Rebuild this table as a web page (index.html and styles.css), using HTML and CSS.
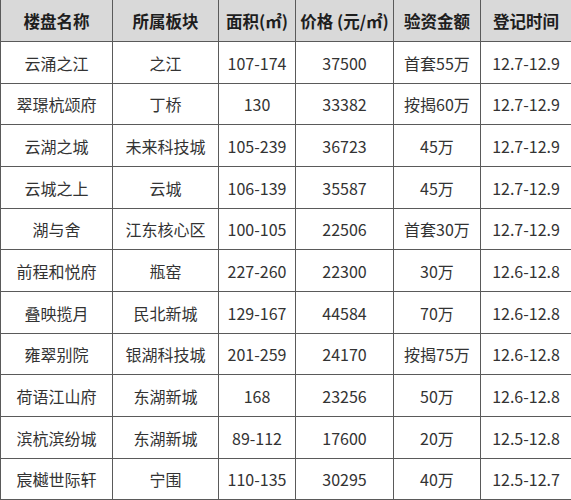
FILE: index.html
```html
<!DOCTYPE html>
<html lang="zh-CN">
<head>
<meta charset="utf-8">
<link rel="stylesheet" href="styles.css">
</head>
<body>
<table class="sheet">
  <colgroup>
    <col class="c1"><col class="c2"><col class="c3"><col class="c4"><col class="c5"><col class="c6">
  </colgroup>
  <thead>
    <tr><th>楼盘名称</th><th>所属板块</th><th>面积(㎡)</th><th>价格 (元/㎡)</th><th>验资金额</th><th>登记时间</th></tr>
  </thead>
  <tbody>
    <tr class="r42"><td>云涌之江</td><td>之江</td><td>107-174</td><td>37500</td><td>首套55万</td><td>12.7-12.9</td></tr>
    <tr class="r41"><td>翠璟杭颂府</td><td>丁桥</td><td>130</td><td>33382</td><td>按揭60万</td><td>12.7-12.9</td></tr>
    <tr class="r42"><td>云湖之城</td><td>未来科技城</td><td>105-239</td><td>36723</td><td>45万</td><td>12.7-12.9</td></tr>
    <tr class="r42"><td>云城之上</td><td>云城</td><td>106-139</td><td>35587</td><td>45万</td><td>12.7-12.9</td></tr>
    <tr class="r41"><td>湖与舍</td><td>江东核心区</td><td>100-105</td><td>22506</td><td>首套30万</td><td>12.7-12.9</td></tr>
    <tr class="r42"><td>前程和悦府</td><td>瓶窑</td><td>227-260</td><td>22300</td><td>30万</td><td>12.6-12.8</td></tr>
    <tr class="r42"><td>叠映揽月</td><td>民北新城</td><td>129-167</td><td>44584</td><td>70万</td><td>12.6-12.8</td></tr>
    <tr class="r41"><td>雍翠别院</td><td>银湖科技城</td><td>201-259</td><td>24170</td><td>按揭75万</td><td>12.6-12.8</td></tr>
    <tr class="r42"><td>荷语江山府</td><td>东湖新城</td><td>168</td><td>23256</td><td>50万</td><td>12.6-12.8</td></tr>
    <tr class="r42"><td>滨杭滨纷城</td><td>东湖新城</td><td>89-112</td><td>17600</td><td>20万</td><td>12.5-12.8</td></tr>
    <tr class="r41"><td>宸樾世际轩</td><td>宁围</td><td>110-135</td><td>30295</td><td>40万</td><td>12.5-12.7</td></tr>
  </tbody>
</table>
</body>
</html>
```
FILE: styles.css
```css
html, body {
  margin: 0;
  padding: 0;
  background: #ffffff;
}
.sheet {
  border-collapse: collapse;
  table-layout: fixed;
  width: 571px;
  margin-top: -1px;
  font-family: "Noto Sans CJK SC", "Noto Sans", sans-serif;
  font-size: 16px;
  color: #333333;
}
.c1 { width: 112px; }
.c2 { width: 106px; }
.c3 { width: 77px; }
.c4 { width: 98px; }
.c5 { width: 87px; }
.c6 { width: 91px; }
.sheet th,
.sheet td {
  border: 1px solid #5a5a5a;
  text-align: center;
  vertical-align: middle;
  padding: 0;
  white-space: nowrap;
  overflow: hidden;
}
.sheet th {
  background: #d9d9d9;
  color: #1e1e1e;
  font-weight: bold;
  height: 41px;
  font-size: 16.5px;
}
.r42 td { height: 41px; }
.r41 td { height: 40px; }
```
